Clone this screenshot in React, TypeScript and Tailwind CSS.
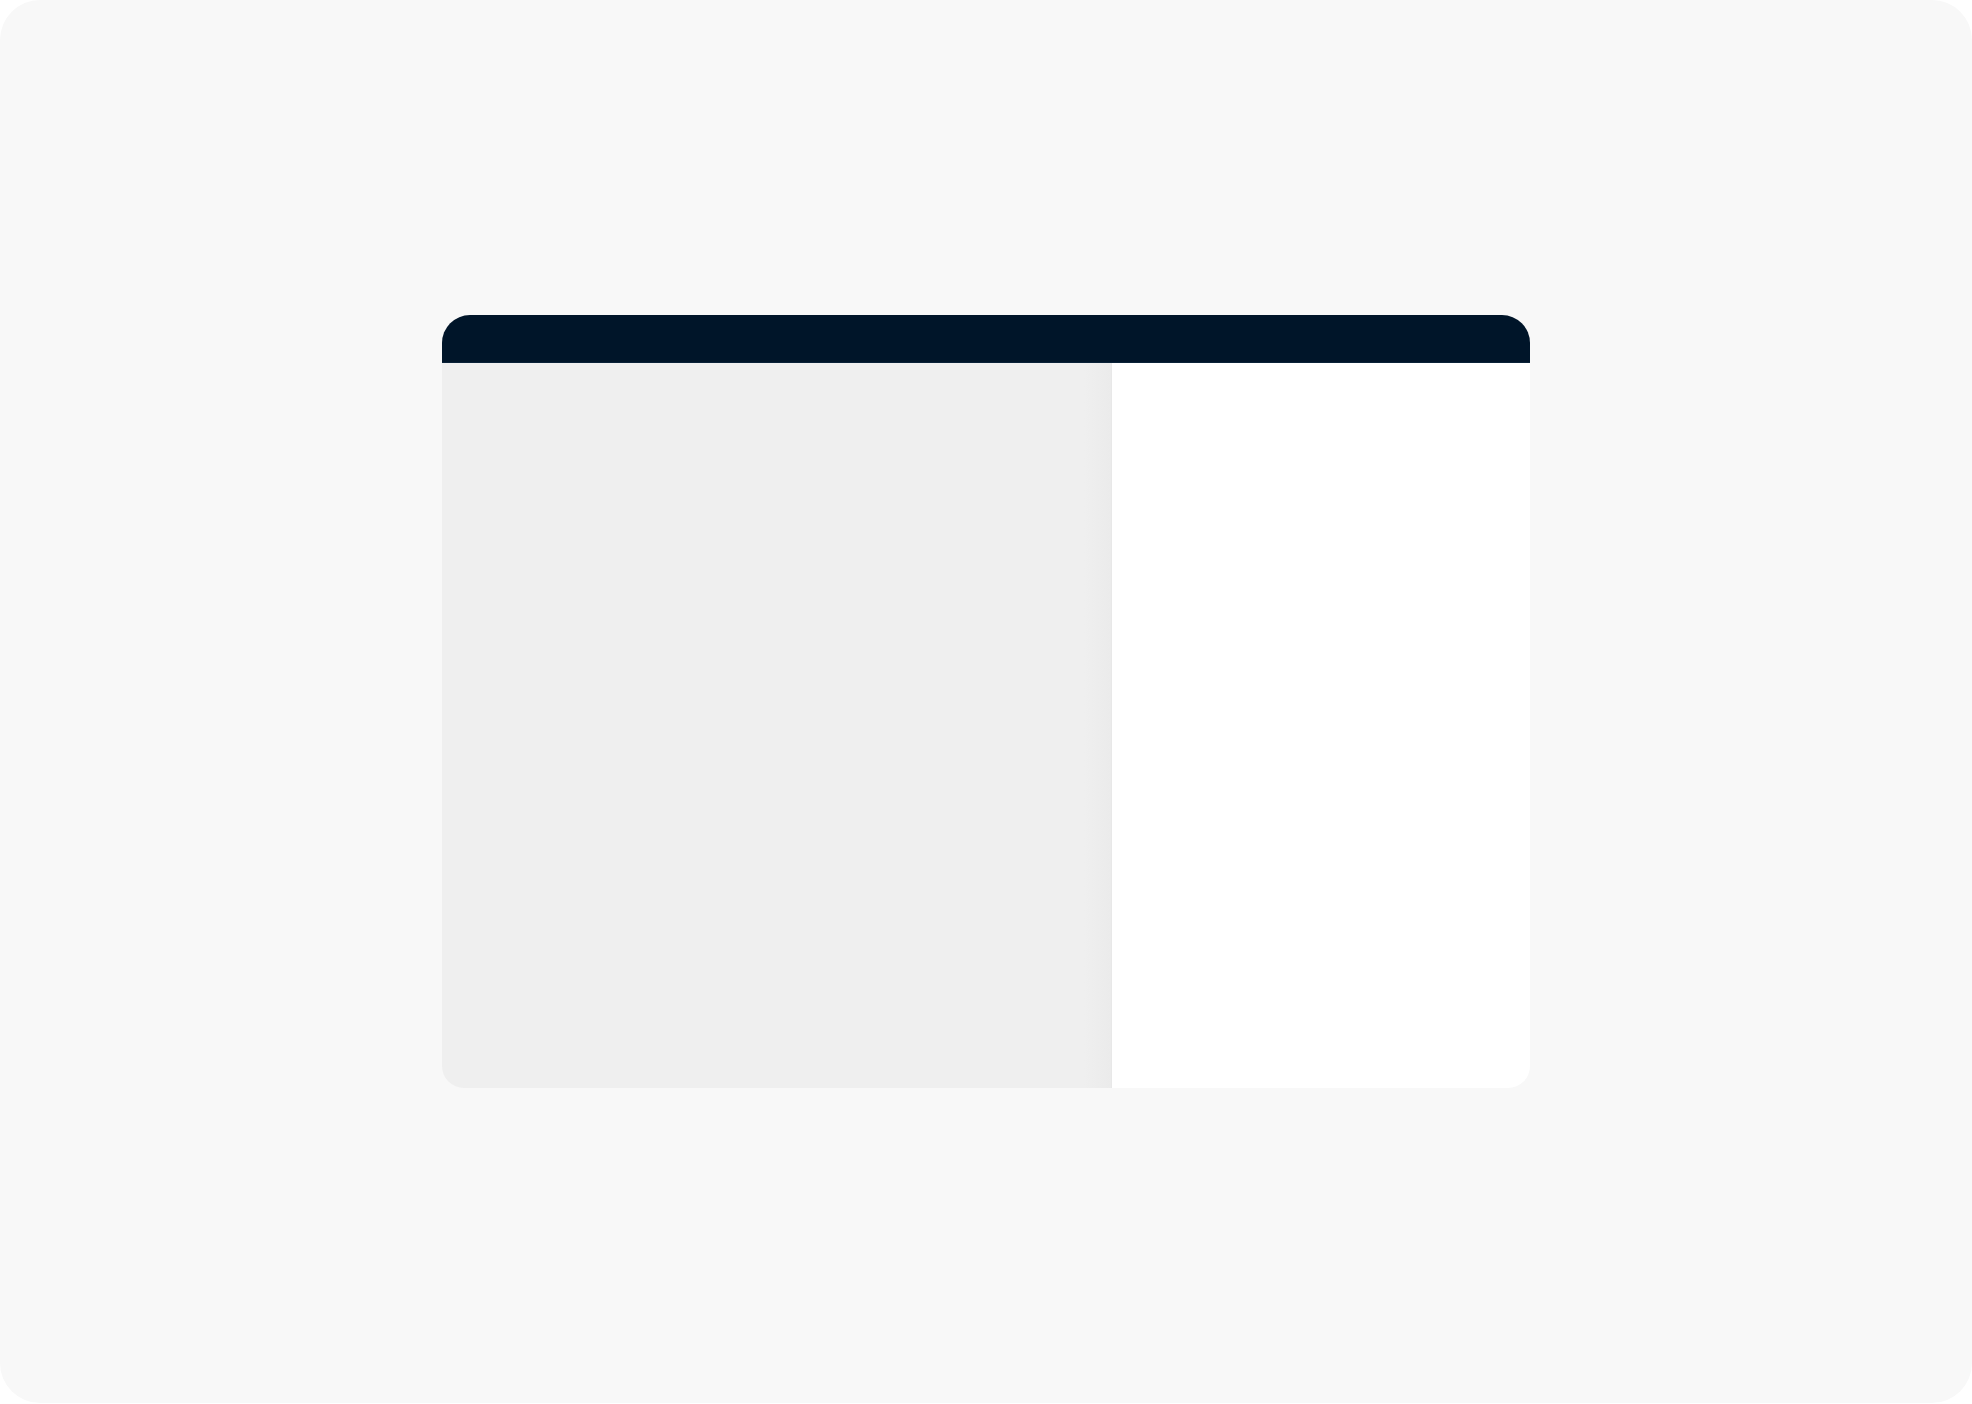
export default function App() {
  return (
    <div className="w-[1972px] h-[1404px] bg-white">
      <div className="w-[1972px] h-[1403px] bg-[#f8f8f8] rounded-[40px] flex items-start justify-center pt-[315px]">
        <div className="w-[1088px] flex flex-col">
          <div className="h-[48px] bg-[#001529] rounded-t-[28px] border-b border-[#0a2238]" />
          <div className="flex h-[725px]">
            <div className="w-[670px] bg-[linear-gradient(to_right,#efefef_0%,#efefef_96%,#ebebeb_100%)] rounded-bl-[22px] border-r border-[#e8e8e8]" />
            <div className="flex-1 bg-white rounded-br-[22px]" />
          </div>
        </div>
      </div>
    </div>
  );
}
